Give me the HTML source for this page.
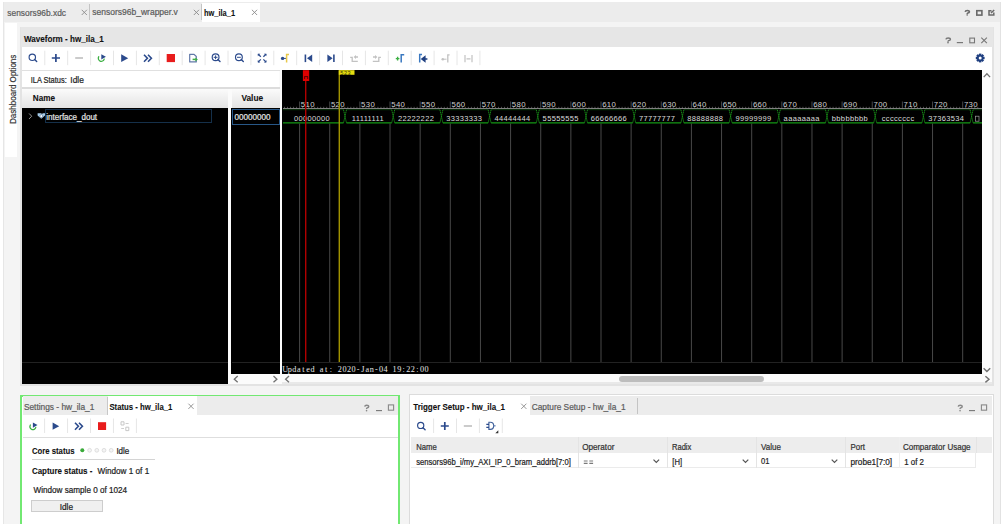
<!DOCTYPE html>
<html><head><meta charset="utf-8">
<style>
*{margin:0;padding:0;box-sizing:border-box}
html,body{width:1006px;height:524px;overflow:hidden;background:#fff;font-family:"Liberation Sans",sans-serif;font-size:8.1px;color:#1e1e1e}
.a{position:absolute}
.t{position:absolute;white-space:pre;line-height:1}
.b{font-weight:bold;font-size:7.9px;color:#111}
.g{color:#6e6e6e}
svg{position:absolute;left:0;top:0}
</style></head><body>

<!-- outer frame -->
<div class="a" style="left:3px;top:2px;width:998px;height:522px;background:#f4f4f4;border-left:1px solid #e6e6e6;border-right:1px solid #e2e2e2"></div>
<!-- top tab bar -->
<div class="a" style="left:4px;top:2px;width:996px;height:19.5px;background:#ececec"></div>
<div class="a" style="left:89px;top:4px;width:1px;height:16px;background:#c4c4c4"></div>
<div class="a" style="left:201px;top:4px;width:1px;height:16px;background:#c4c4c4"></div>
<div class="a" style="left:202px;top:3px;width:58px;height:18.5px;background:#fff"></div>

<!-- sidebar -->
<div class="a" style="left:4.5px;top:22.5px;width:12px;height:134.7px;background:#fff"></div>

<!-- waveform panel -->
<div class="a" style="left:20.2px;top:26.5px;width:973.6px;height:359px;background:#e3e3e3"></div>
<div class="a" style="left:21px;top:27.2px;width:972px;height:19.8px;background:#e6e6e6"></div>
<div class="a" style="left:22.4px;top:47px;width:969.3px;height:336.6px;background:#fbfbfb"></div>
<div class="a" style="left:22.4px;top:47px;width:969.3px;height:23px;background:#fff"></div>
<div class="a" style="left:22.4px;top:69.9px;width:257.6px;height:1px;background:#e0e0e0"></div>
<div class="a" style="left:22.4px;top:70.9px;width:256.8px;height:16.3px;background:#fff"></div>
<div class="a" style="left:22.4px;top:87.2px;width:257.6px;height:1.5px;background:#dcdcdc"></div>
<!-- name header -->
<div class="a" style="left:22.4px;top:88.7px;width:205.6px;height:19.6px;background:linear-gradient(#fbfbfb,#e3e3e3)"></div>
<div class="a" style="left:231.5px;top:88.7px;width:48px;height:19.6px;background:linear-gradient(#fbfbfb,#e3e3e3)"></div>
<!-- black panes -->
<div class="a" style="left:22.3px;top:108.3px;width:205.7px;height:275.3px;background:#000"></div>
<div class="a" style="left:231.3px;top:108.3px;width:48.6px;height:265.3px;background:#000"></div>
<div class="a" style="left:282.2px;top:70.2px;width:699.7px;height:303.4px;background:#000"></div>
<div class="a" style="left:22.3px;top:361.6px;width:205.7px;height:1px;background:#222"></div>
<div class="a" style="left:231.5px;top:361.6px;width:48.4px;height:1px;background:#222"></div>
<div class="a" style="left:282.2px;top:361.6px;width:699.7px;height:1px;background:#222"></div>
<!-- rows -->
<div class="a" style="left:45.4px;top:108.6px;width:167px;height:14.5px;border:1px solid #15304a"></div>
<div class="a" style="left:231.8px;top:108.5px;width:47.8px;height:16px;border:1.5px solid #285888"></div>
<!-- scrollbars -->
<div class="a" style="left:282.2px;top:382.3px;width:709.5px;height:1.3px;background:#e9e9e9"></div>
<div class="a" style="left:619px;top:375.8px;width:145px;height:6.1px;background:#bdbdbd;border-radius:3px"></div>

<!-- bottom left panel -->
<div class="a" style="left:20.4px;top:394.6px;width:379.4px;height:140px;border:2.1px solid #72e872;background:#fff"></div>
<div class="a" style="left:22.9px;top:396.3px;width:375.2px;height:18.3px;background:#ececec"></div>
<div class="a" style="left:106.5px;top:397px;width:1px;height:17.5px;background:#c8c8c8"></div>
<div class="a" style="left:107.5px;top:396.3px;width:89.5px;height:18.3px;background:#fff"></div>
<div class="a" style="left:23px;top:436.5px;width:375px;height:1px;background:#dedede"></div>
<div class="a" style="left:32px;top:459px;width:123px;height:1px;background:#d4d4d4"></div>
<div class="a" style="left:31px;top:499.6px;width:72px;height:12px;background:#f0f0f0;border:1px solid #cdcdcd"></div>

<!-- bottom right panel -->
<div class="a" style="left:409.4px;top:394.4px;width:584.6px;height:140px;border:1.8px solid #dcdcdc;background:#fff"></div>
<div class="a" style="left:411.2px;top:396.2px;width:580.8px;height:18.5px;background:#ececec"></div>
<div class="a" style="left:411.2px;top:396.2px;width:119px;height:18.5px;background:#fff"></div>
<div class="a" style="left:637px;top:397.5px;width:1px;height:16px;background:#c4c4c4"></div>
<div class="a" style="left:411.2px;top:437.3px;width:580.8px;height:15.5px;background:#ededed"></div>
<div class="a" style="left:411.2px;top:452.8px;width:565px;height:15.2px;background:#fff;border-bottom:1px solid #ebebeb;border-right:1px solid #ebebeb"></div>
<div class="a" style="left:577.9px;top:437.3px;width:1px;height:30.7px;background:#e4e4e4"></div>
<div class="a" style="left:666.5px;top:437.3px;width:1px;height:30.7px;background:#e4e4e4"></div>
<div class="a" style="left:755.9px;top:437.3px;width:1px;height:30.7px;background:#e4e4e4"></div>
<div class="a" style="left:845.4px;top:437.3px;width:1px;height:30.7px;background:#e4e4e4"></div>
<div class="a" style="left:898.5px;top:437.3px;width:1px;height:30.7px;background:#efefef"></div>
<div class="a" style="left:976.2px;top:437.3px;width:1px;height:15.5px;background:#e4e4e4"></div>

<svg width="1006" height="524" viewBox="0 0 1006 524">
<path d="M299.60 123.5V362M329.74 123.5V362M359.88 123.5V362M390.02 123.5V362M420.16 123.5V362M450.30 123.5V362M480.44 123.5V362M510.58 123.5V362M540.72 123.5V362M570.86 123.5V362M601.00 123.5V362M631.14 123.5V362M661.28 123.5V362M691.42 123.5V362M721.56 123.5V362M751.70 123.5V362M781.84 123.5V362M811.98 123.5V362M842.12 123.5V362M872.26 123.5V362M902.40 123.5V362M932.54 123.5V362M962.68 123.5V362" stroke="#484848" stroke-width="1" fill="none"/>
<path d="M283 108.5H982" stroke="#808080" stroke-width="1"/>
<path d="M299.60 101.5V108M329.74 101.5V108M359.88 101.5V108M390.02 101.5V108M420.16 101.5V108M450.30 101.5V108M480.44 101.5V108M510.58 101.5V108M540.72 101.5V108M570.86 101.5V108M601.00 101.5V108M631.14 101.5V108M661.28 101.5V108M691.42 101.5V108M721.56 101.5V108M751.70 101.5V108M781.84 101.5V108M811.98 101.5V108M842.12 101.5V108M872.26 101.5V108M902.40 101.5V108M932.54 101.5V108M962.68 101.5V108" stroke="#464646" stroke-width="1" fill="none"/>
<path d="M284.53 106.8V108M287.54 106.8V108M290.56 106.8V108M293.57 106.8V108M296.59 106.8V108M302.61 106.8V108M305.63 106.8V108M308.64 106.8V108M311.66 106.8V108M314.67 106.8V108M317.68 106.8V108M320.70 106.8V108M323.71 106.8V108M326.73 106.8V108M332.75 106.8V108M335.77 106.8V108M338.78 106.8V108M341.80 106.8V108M344.81 106.8V108M347.82 106.8V108M350.84 106.8V108M353.85 106.8V108M356.87 106.8V108M362.89 106.8V108M365.91 106.8V108M368.92 106.8V108M371.94 106.8V108M374.95 106.8V108M377.96 106.8V108M380.98 106.8V108M383.99 106.8V108M387.01 106.8V108M393.03 106.8V108M396.05 106.8V108M399.06 106.8V108M402.08 106.8V108M405.09 106.8V108M408.10 106.8V108M411.12 106.8V108M414.13 106.8V108M417.15 106.8V108M423.17 106.8V108M426.19 106.8V108M429.20 106.8V108M432.22 106.8V108M435.23 106.8V108M438.24 106.8V108M441.26 106.8V108M444.27 106.8V108M447.29 106.8V108M453.31 106.8V108M456.33 106.8V108M459.34 106.8V108M462.36 106.8V108M465.37 106.8V108M468.38 106.8V108M471.40 106.8V108M474.41 106.8V108M477.43 106.8V108M483.45 106.8V108M486.47 106.8V108M489.48 106.8V108M492.50 106.8V108M495.51 106.8V108M498.52 106.8V108M501.54 106.8V108M504.55 106.8V108M507.57 106.8V108M513.59 106.8V108M516.61 106.8V108M519.62 106.8V108M522.64 106.8V108M525.65 106.8V108M528.66 106.8V108M531.68 106.8V108M534.69 106.8V108M537.71 106.8V108M543.73 106.8V108M546.75 106.8V108M549.76 106.8V108M552.78 106.8V108M555.79 106.8V108M558.80 106.8V108M561.82 106.8V108M564.83 106.8V108M567.85 106.8V108M573.87 106.8V108M576.89 106.8V108M579.90 106.8V108M582.92 106.8V108M585.93 106.8V108M588.94 106.8V108M591.96 106.8V108M594.97 106.8V108M597.99 106.8V108M604.01 106.8V108M607.03 106.8V108M610.04 106.8V108M613.06 106.8V108M616.07 106.8V108M619.08 106.8V108M622.10 106.8V108M625.11 106.8V108M628.13 106.8V108M634.15 106.8V108M637.17 106.8V108M640.18 106.8V108M643.20 106.8V108M646.21 106.8V108M649.22 106.8V108M652.24 106.8V108M655.25 106.8V108M658.27 106.8V108M664.29 106.8V108M667.31 106.8V108M670.32 106.8V108M673.34 106.8V108M676.35 106.8V108M679.36 106.8V108M682.38 106.8V108M685.39 106.8V108M688.41 106.8V108M694.43 106.8V108M697.45 106.8V108M700.46 106.8V108M703.48 106.8V108M706.49 106.8V108M709.50 106.8V108M712.52 106.8V108M715.53 106.8V108M718.55 106.8V108M724.57 106.8V108M727.59 106.8V108M730.60 106.8V108M733.62 106.8V108M736.63 106.8V108M739.64 106.8V108M742.66 106.8V108M745.67 106.8V108M748.69 106.8V108M754.71 106.8V108M757.73 106.8V108M760.74 106.8V108M763.76 106.8V108M766.77 106.8V108M769.78 106.8V108M772.80 106.8V108M775.81 106.8V108M778.83 106.8V108M784.85 106.8V108M787.87 106.8V108M790.88 106.8V108M793.90 106.8V108M796.91 106.8V108M799.92 106.8V108M802.94 106.8V108M805.95 106.8V108M808.97 106.8V108M814.99 106.8V108M818.01 106.8V108M821.02 106.8V108M824.04 106.8V108M827.05 106.8V108M830.06 106.8V108M833.08 106.8V108M836.09 106.8V108M839.11 106.8V108M845.13 106.8V108M848.15 106.8V108M851.16 106.8V108M854.18 106.8V108M857.19 106.8V108M860.20 106.8V108M863.22 106.8V108M866.23 106.8V108M869.25 106.8V108M875.27 106.8V108M878.29 106.8V108M881.30 106.8V108M884.32 106.8V108M887.33 106.8V108M890.34 106.8V108M893.36 106.8V108M896.37 106.8V108M899.39 106.8V108M905.41 106.8V108M908.43 106.8V108M911.44 106.8V108M914.46 106.8V108M917.47 106.8V108M920.48 106.8V108M923.50 106.8V108M926.51 106.8V108M929.53 106.8V108M935.55 106.8V108M938.57 106.8V108M941.58 106.8V108M944.60 106.8V108M947.61 106.8V108M950.62 106.8V108M953.64 106.8V108M956.65 106.8V108M959.67 106.8V108M965.69 106.8V108M968.71 106.8V108M971.72 106.8V108M974.74 106.8V108M977.75 106.8V108" stroke="#5a5a5a" stroke-width="0.9" fill="none"/>
<g font-family="Liberation Sans" font-size="7.8" letter-spacing="0.35" fill="#d0d0d0"><text x="300.80" y="106.6">510</text><text x="330.94" y="106.6">520</text><text x="361.08" y="106.6">530</text><text x="391.22" y="106.6">540</text><text x="421.36" y="106.6">550</text><text x="451.50" y="106.6">560</text><text x="481.64" y="106.6">570</text><text x="511.78" y="106.6">580</text><text x="541.92" y="106.6">590</text><text x="572.06" y="106.6">600</text><text x="602.20" y="106.6">610</text><text x="632.34" y="106.6">620</text><text x="662.48" y="106.6">630</text><text x="692.62" y="106.6">640</text><text x="722.76" y="106.6">650</text><text x="752.90" y="106.6">660</text><text x="783.04" y="106.6">670</text><text x="813.18" y="106.6">680</text><text x="843.32" y="106.6">690</text><text x="873.46" y="106.6">700</text><text x="903.60" y="106.6">710</text><text x="933.74" y="106.6">720</text><text x="963.88" y="106.6">730</text></g>
<path d="M283.00 109.7H343.50M346.50 109.7H391.70M394.70 109.7H439.90M442.90 109.7H488.10M491.10 109.7H536.30M539.30 109.7H584.50M587.50 109.7H632.70M635.70 109.7H680.90M683.90 109.7H729.10M732.10 109.7H777.30M780.30 109.7H825.50M828.50 109.7H873.70M876.70 109.7H921.90M924.90 109.7H970.10M973.10 109.7H982.00" stroke="#0a360a" stroke-width="1" fill="none"/>
<path d="M283.00 122.9H343.50M346.50 122.9H391.70M394.70 122.9H439.90M442.90 122.9H488.10M491.10 122.9H536.30M539.30 122.9H584.50M587.50 122.9H632.70M635.70 122.9H680.90M683.90 122.9H729.10M732.10 122.9H777.30M780.30 122.9H825.50M828.50 122.9H873.70M876.70 122.9H921.90M924.90 122.9H970.10M973.10 122.9H982.00" stroke="#149614" stroke-width="1.3" fill="none"/>
<path d="M343.50 109.7L346.50 122.9M346.50 109.7L343.50 122.9M391.70 109.7L394.70 122.9M394.70 109.7L391.70 122.9M439.90 109.7L442.90 122.9M442.90 109.7L439.90 122.9M488.10 109.7L491.10 122.9M491.10 109.7L488.10 122.9M536.30 109.7L539.30 122.9M539.30 109.7L536.30 122.9M584.50 109.7L587.50 122.9M587.50 109.7L584.50 122.9M632.70 109.7L635.70 122.9M635.70 109.7L632.70 122.9M680.90 109.7L683.90 122.9M683.90 109.7L680.90 122.9M729.10 109.7L732.10 122.9M732.10 109.7L729.10 122.9M777.30 109.7L780.30 122.9M780.30 109.7L777.30 122.9M825.50 109.7L828.50 122.9M828.50 109.7L825.50 122.9M873.70 109.7L876.70 122.9M876.70 109.7L873.70 122.9M921.90 109.7L924.90 122.9M924.90 109.7L921.90 122.9M970.10 109.7L973.10 122.9M973.10 109.7L970.10 122.9" stroke="#1aa01a" stroke-width="1" fill="none" stroke-dasharray="1.2 0.8"/>
<g font-family="Liberation Sans" font-size="7.5" letter-spacing="0.35" fill="#dcdcdc"><text x="312.00" y="121.2" text-anchor="middle">00000000</text><text x="367.90" y="121.2" text-anchor="middle">11111111</text><text x="416.10" y="121.2" text-anchor="middle">22222222</text><text x="464.30" y="121.2" text-anchor="middle">33333333</text><text x="512.50" y="121.2" text-anchor="middle">44444444</text><text x="560.70" y="121.2" text-anchor="middle">55555555</text><text x="608.90" y="121.2" text-anchor="middle">66666666</text><text x="657.10" y="121.2" text-anchor="middle">77777777</text><text x="705.30" y="121.2" text-anchor="middle">88888888</text><text x="753.50" y="121.2" text-anchor="middle">99999999</text><text x="801.70" y="121.2" text-anchor="middle">aaaaaaaa</text><text x="849.90" y="121.2" text-anchor="middle">bbbbbbbb</text><text x="898.10" y="121.2" text-anchor="middle">cccccccc</text><text x="946.30" y="121.2" text-anchor="middle">37363534</text></g>
<rect x="975.6" y="116.2" width="3.4" height="5" fill="none" stroke="#a0a0a0" stroke-width="0.7"/>
<text x="285.20 289.76 294.32 298.88 303.44 308.00 312.56 317.12 321.68 326.24 330.80 335.36 339.92 344.48 349.04 353.60 358.16 362.72 367.28 371.84 376.40 380.96 385.52 390.08 394.64 399.20 403.76 408.32 412.88 417.44 422.00 426.56" y="372" text-anchor="middle" font-family="Liberation Serif" font-size="8.2" fill="#e6e6e6">Updated&#160;at:&#160;2020-Jan-04&#160;19:22:00</text>
<path d="M44.80 50.7V65.2M67.70 50.7V65.2M90.60 50.7V65.2M113.50 50.7V65.2M136.40 50.7V65.2M159.30 50.7V65.2M182.20 50.7V65.2M205.10 50.7V65.2M228.00 50.7V65.2M250.90 50.7V65.2M273.80 50.7V65.2M296.70 50.7V65.2M319.60 50.7V65.2M342.50 50.7V65.2M365.40 50.7V65.2M388.30 50.7V65.2M411.20 50.7V65.2M434.10 50.7V65.2M457.00 50.7V65.2M479.90 50.7V65.2" stroke="#e6e6e6" stroke-width="1" fill="none"/>
<circle cx="32.3" cy="57.3" r="3.2" stroke="#2b4a8c" stroke-width="1.15" fill="none"/><path d="M34.60 59.60L36.70 61.60" stroke="#2b4a8c" stroke-width="1.4" stroke-linecap="round"/>
<path d="M51.80 58H60.00M55.9 53.90V62.10" stroke="#2b4a8c" stroke-width="1.7"/>
<path d="M75.20 58H83.00" stroke="#c2c2c2" stroke-width="1.7"/>
<path d="M98.76 56.71A3.0 3.0 0 1 0 104.18 59.13" stroke="#3cb043" stroke-width="1.3" fill="none" stroke-linecap="round"/><path d="M101.30 54.30L105.90 56.80L101.30 59.50Z" fill="#2b4a8c"/>
<path d="M121.2 54.2L128.2 58.15L121.2 62.1Z" fill="#2b4a8c"/>
<path d="M144 54.7L147.4 58.2L144 61.7M148 54.7L151.4 58.2L148 61.7" stroke="#2b4a8c" stroke-width="1.6" fill="none"/>
<rect x="166.7" y="54" width="8.30" height="8.10" fill="#e81c1c"/>
<path d="M189.7 54.3H194.1L196.3 56.5V61.9H189.7Z" stroke="#6178a8" stroke-width="1.2" fill="#fff" stroke-linejoin="round"/>
<path d="M192.6 59.4H195.8" stroke="#3cb043" stroke-width="1.5"/><path d="M195.3 57.4L197.9 59.4L195.3 61.4Z" fill="#3cb043"/>
<circle cx="215.6" cy="57.3" r="3.4" stroke="#2b4a8c" stroke-width="1.15" fill="none"/><path d="M217.90 59.60L220.00 61.60" stroke="#2b4a8c" stroke-width="1.4" stroke-linecap="round"/>
<path d="M213.7 57.3H217.5M215.6 55.4V59.2" stroke="#2b4a8c" stroke-width="1"/>
<circle cx="238.9" cy="57.3" r="3.4" stroke="#2b4a8c" stroke-width="1.15" fill="none"/><path d="M241.20 59.60L243.30 61.60" stroke="#2b4a8c" stroke-width="1.4" stroke-linecap="round"/>
<path d="M237 57.3H240.8" stroke="#2b4a8c" stroke-width="1"/>
<path d="M258.10 54.10L260.80 56.80" stroke="#2b4a8c" stroke-width="1.3"/><path d="M257.80 53.80L257.80 56.30L260.30 53.80Z" fill="#2b4a8c"/><path d="M258.10 62.10L260.80 59.40" stroke="#2b4a8c" stroke-width="1.3"/><path d="M257.80 62.40L257.80 59.90L260.30 62.40Z" fill="#2b4a8c"/><path d="M266.10 54.10L263.40 56.80" stroke="#2b4a8c" stroke-width="1.3"/><path d="M266.40 53.80L266.40 56.30L263.90 53.80Z" fill="#2b4a8c"/><path d="M266.10 62.10L263.40 59.40" stroke="#2b4a8c" stroke-width="1.3"/><path d="M266.40 62.40L266.40 59.90L263.90 62.40Z" fill="#2b4a8c"/>
<circle cx="282.6" cy="58.4" r="1.7" fill="#2b4a8c"/><path d="M283.5 58.4H286" stroke="#2b4a8c" stroke-width="1"/><path d="M289 54.6H286.6V62.6" stroke="#e8c84a" stroke-width="1.5" fill="none"/>
<path d="M305.4 54.5V62.1" stroke="#2b4a8c" stroke-width="1.6"/><path d="M312.2 54.5L307 58.30L312.2 62.1Z" fill="#2b4a8c"/>
<path d="M333.9 54.5V62.1" stroke="#2b4a8c" stroke-width="1.6"/><path d="M327.4 54.5L332.6 58.30L327.4 62.1Z" fill="#2b4a8c"/>
<path d="M350.2 57.3H352.2V61.4H357.8" stroke="#c2c2c2" stroke-width="1.3" fill="none"/><path d="M355.2 57H358" stroke="#c2c2c2" stroke-width="1.5"/><path d="M356 55.1L353.6 57L356 58.9Z" fill="#c2c2c2"/>
<path d="M372.8 61.4H378.8V57.3H380.9" stroke="#c2c2c2" stroke-width="1.3" fill="none"/><path d="M373 57H375.8" stroke="#c2c2c2" stroke-width="1.5"/><path d="M375 55.1L377.4 57L375 58.9Z" fill="#c2c2c2"/>
<path d="M395.8 58.6H399.4M397.6 56.8V60.4" stroke="#3cb043" stroke-width="1.4"/><path d="M404.2 54.7H401.2V62.4" stroke="#3a78c0" stroke-width="1.5" fill="none"/>
<path d="M422 54.6H419.7V62.4" stroke="#3a78c0" stroke-width="1.5" fill="none"/><path d="M427.4 59H424M424.8 56.8L422 59L424.8 61.2Z" stroke="#1f3f80" stroke-width="1.6" fill="#1f3f80"/>
<circle cx="442.8" cy="59.2" r="1.3" fill="#c2c2c2"/><path d="M444 59.2H446.5" stroke="#c2c2c2" stroke-width="1"/><path d="M449.6 54.8H447.8V62.4" stroke="#c2c2c2" stroke-width="1.3" fill="none"/>
<path d="M465 55V62.3M472 55V62.3M466.5 58.8H470.5" stroke="#c2c2c2" stroke-width="1.2" fill="none"/>
<rect x="979.00" y="53.60" width="2.4" height="2.2" fill="#1f3f80" transform="rotate(0 980.2 58)"/><rect x="979.00" y="53.60" width="2.4" height="2.2" fill="#1f3f80" transform="rotate(45 980.2 58)"/><rect x="979.00" y="53.60" width="2.4" height="2.2" fill="#1f3f80" transform="rotate(90 980.2 58)"/><rect x="979.00" y="53.60" width="2.4" height="2.2" fill="#1f3f80" transform="rotate(135 980.2 58)"/><rect x="979.00" y="53.60" width="2.4" height="2.2" fill="#1f3f80" transform="rotate(180 980.2 58)"/><rect x="979.00" y="53.60" width="2.4" height="2.2" fill="#1f3f80" transform="rotate(225 980.2 58)"/><rect x="979.00" y="53.60" width="2.4" height="2.2" fill="#1f3f80" transform="rotate(270 980.2 58)"/><rect x="979.00" y="53.60" width="2.4" height="2.2" fill="#1f3f80" transform="rotate(315 980.2 58)"/><circle cx="980.2" cy="58" r="3.1" fill="#1f3f80"/><circle cx="980.2" cy="58" r="1.5" fill="#fff"/>
<path d="M965.20 11.80Q965.40 10.50 967.25 10.50Q969.40 10.50 969.40 11.80Q969.30 12.70 967.75 13.10Q967.15 13.40 967.15 14.20" stroke="#6a6a6a" stroke-width="1.6" fill="none"/><circle cx="967.15" cy="15.05" r="0.8" fill="#6a6a6a"/>
<rect x="976.8" y="10.7" width="5.10" height="4.40" stroke="#6a6a6a" stroke-width="1.6" fill="none"/>
<path d="M991.5 10.7H989V15.1H993.8V12.6M991 13L994.2 10" stroke="#6a6a6a" stroke-width="1.5" fill="none"/>
<path d="M81.70 9.80L86.90 15.00M86.90 9.80L81.70 15.00" stroke="#8a8a8a" stroke-width="0.9"/>
<path d="M193.80 9.80L199.00 15.00M199.00 9.80L193.80 15.00" stroke="#8a8a8a" stroke-width="0.9"/>
<path d="M251.90 9.80L257.10 15.00M257.10 9.80L251.90 15.00" stroke="#8a8a8a" stroke-width="0.9"/>
<path d="M945.90 39.30Q946.10 38.00 948.10 38.00Q950.40 38.00 950.40 39.30Q950.30 40.20 948.60 40.60Q948.00 40.90 948.00 41.70" stroke="#777" stroke-width="1.4" fill="none"/><circle cx="948.00" cy="42.65" r="0.8" fill="#777"/>
<path d="M956.8 42.6H963" stroke="#777" stroke-width="1.2"/>
<rect x="969.8" y="38.1" width="4.70" height="4.70" stroke="#777" stroke-width="1.1" fill="none"/>
<path d="M981.30 37.60L986.90 43.20M986.90 37.60L981.30 43.20" stroke="#777" stroke-width="1.1"/>
<path d="M237.70 376.10L234.30 379.20L237.70 382.30" stroke="#707070" stroke-width="1.3" fill="none"/>
<path d="M273.50 376.10L276.90 379.20L273.50 382.30" stroke="#707070" stroke-width="1.3" fill="none"/>
<path d="M289.00 376.10L285.60 379.20L289.00 382.30" stroke="#707070" stroke-width="1.3" fill="none"/>
<path d="M985.40 376.20L989.00 379.30L985.40 382.40" stroke="#707070" stroke-width="1.4" fill="none"/>
<path d="M983.70 77.10L986.90 73.70L990.10 77.10" stroke="#707070" stroke-width="1.3" fill="none"/>
<path d="M983.60 368.20L986.90 371.60L990.20 368.20" stroke="#707070" stroke-width="1.4" fill="none"/>
<path d="M29.10 113.50L31.70 116.20L29.10 118.90" stroke="#9a9a9a" stroke-width="1" fill="none"/>
<path d="M37.6 113.2H41.3L42 114.2L42.7 113.2H45V115.5L41.3 118.8L37.6 115.5Z" fill="#a8cdea"/><circle cx="41.3" cy="116.1" r="1.5" fill="#fff" stroke="#4a6a8a" stroke-width="0.6"/>
<path d="M305.7 81V362" stroke="#b00000" stroke-width="1.4"/>
<rect x="302.9" y="70.2" width="6.3" height="10.8" fill="#e00000"/>
<path d="M304.3 76.6H308M304.6 76.6V79M307.7 76.6V79" stroke="#500000" stroke-width="0.9" fill="none"/>
<path d="M339.3 70.2V362" stroke="#a09200" stroke-width="1.4"/>
<rect x="338.8" y="70.2" width="15.7" height="4.6" fill="#e4dc10"/>
<text x="340.2" y="74.6" font-family="Liberation Sans" font-size="5.6" letter-spacing="0.6" fill="#3a3400">523</text>
<path d="M44.60 418.5V433M67.55 418.5V433M90.50 418.5V433M113.45 418.5V433M136.40 418.5V433" stroke="#e6e6e6" stroke-width="1" fill="none"/>
<path d="M30.36 425.01A3.0 3.0 0 1 0 35.78 427.43" stroke="#3cb043" stroke-width="1.3" fill="none" stroke-linecap="round"/><path d="M32.90 422.60L37.50 425.10L32.90 427.80Z" fill="#2b4a8c"/>
<path d="M52.6 422.6L59.2 426.15L52.6 429.7Z" fill="#2b4a8c"/>
<path d="M75 422.7L78.4 426.2L75 429.7M79 422.7L82.4 426.2L79 429.7" stroke="#2b4a8c" stroke-width="1.6" fill="none"/>
<rect x="98" y="422.2" width="8.10" height="7.80" fill="#e81c1c"/>
<path d="M121 421.8H124V425H121ZM125.8 427.2H128.8V430.6H125.8Z" stroke="#c2c2c2" stroke-width="0.9" fill="none"/><path d="M125.6 423.5H128.6M121.2 428.5H124" stroke="#c2c2c2" stroke-width="0.8"/>
<path d="M188.40 403.70L193.60 408.90M193.60 403.70L188.40 408.90" stroke="#8a8a8a" stroke-width="0.9"/>
<path d="M364.70 406.60Q364.90 405.30 366.65 405.30Q368.70 405.30 368.70 406.60Q368.60 407.50 367.15 407.90Q366.55 408.20 366.55 409.00" stroke="#888" stroke-width="1.4" fill="none"/><circle cx="366.55" cy="410.65" r="0.8" fill="#888"/>
<path d="M376 410.6H382" stroke="#777" stroke-width="1.1"/>
<rect x="388.4" y="404.9" width="5.20" height="5.30" stroke="#888" stroke-width="1.1" fill="none"/>
<circle cx="82.3" cy="450.2" r="2" fill="#3aaa3a"/>
<circle cx="89.6" cy="450.3" r="1.9" fill="#f4f4f4" stroke="#d4d4d4" stroke-width="0.7"/>
<circle cx="96.8" cy="450.3" r="1.9" fill="#f4f4f4" stroke="#d4d4d4" stroke-width="0.7"/>
<circle cx="104" cy="450.3" r="1.9" fill="#f4f4f4" stroke="#d4d4d4" stroke-width="0.7"/>
<circle cx="111.2" cy="450.3" r="1.9" fill="#f4f4f4" stroke="#d4d4d4" stroke-width="0.7"/>
<path d="M433.60 418.5V433M456.50 418.5V433M479.40 418.5V433M502.30 418.5V433" stroke="#e6e6e6" stroke-width="1" fill="none"/>
<circle cx="420.7" cy="425.4" r="3.1" stroke="#2b4a8c" stroke-width="1.15" fill="none"/><path d="M423.00 427.70L425.10 429.70" stroke="#2b4a8c" stroke-width="1.4" stroke-linecap="round"/>
<path d="M440.80 426H448.80M444.8 422.00V430.00" stroke="#2b4a8c" stroke-width="1.7"/>
<path d="M463.80 426H472.00" stroke="#c2c2c2" stroke-width="1.7"/>
<path d="M488.9 422.2H490.3A3.4 3.6 0 0 1 490.3 429.4H488.9Z" stroke="#40609a" stroke-width="1.15" fill="none"/><path d="M486.3 424.3H489M486.3 427.4H489" stroke="#2b4a8c" stroke-width="1.2"/><path d="M493.6 425.8H495.6" stroke="#6a88b8" stroke-width="1.3"/><path d="M498.3 430.2V433.2H495.3Z" fill="#333"/>
<path d="M521.20 403.70L526.40 408.90M526.40 403.70L521.20 408.90" stroke="#8a8a8a" stroke-width="0.9"/>
<path d="M958.20 406.60Q958.40 405.30 960.15 405.30Q962.20 405.30 962.20 406.60Q962.10 407.50 960.65 407.90Q960.05 408.20 960.05 409.00" stroke="#888" stroke-width="1.4" fill="none"/><circle cx="960.05" cy="410.65" r="0.8" fill="#888"/>
<path d="M969 410.6H975" stroke="#777" stroke-width="1.1"/>
<rect x="981.4" y="404.9" width="5.20" height="5.30" stroke="#888" stroke-width="1.1" fill="none"/>
<path d="M653.50 459.60L656.30 462.40L659.10 459.60" stroke="#555" stroke-width="1.2" fill="none"/>
<path d="M742.70 459.60L745.50 462.40L748.30 459.60" stroke="#555" stroke-width="1.2" fill="none"/>
<path d="M831.70 459.60L834.50 462.40L837.30 459.60" stroke="#555" stroke-width="1.2" fill="none"/>
<g font-family="Liberation Sans" font-size="8.5" style="white-space:pre"><text transform="translate(7.30 15.6) scale(0.986 1)" fill="#5c5c5c" stroke="#5c5c5c" stroke-width="0.22">sensors96b.xdc</text>
<text transform="translate(92.20 15.4) scale(1.002 1)" fill="#5c5c5c" stroke="#5c5c5c" stroke-width="0.22">sensors96b_wrapper.v</text>
<text transform="translate(204.00 15.8) scale(0.877 1)" fill="#111" stroke="#111" stroke-width="0.1" font-weight="bold">hw_ila_1</text>
<text transform="translate(23.90 41.8) scale(0.954 1)" fill="#111" stroke="#111" stroke-width="0.1" font-weight="bold">Waveform - hw_ila_1</text>
<text transform="translate(30.70 82.8) scale(0.878 1)" fill="#1e1e1e" stroke="#1e1e1e" stroke-width="0.22">ILA Status:</text>
<text transform="translate(70.30 82.8) scale(0.986 1)" fill="#1e1e1e" stroke="#1e1e1e" stroke-width="0.22">Idle</text>
<text transform="translate(32.80 101.2) scale(0.963 1)" fill="#111" stroke="#111" stroke-width="0.1" font-weight="bold">Name</text>
<text transform="translate(241.40 101.2) scale(0.981 1)" fill="#111" stroke="#111" stroke-width="0.1" font-weight="bold">Value</text>
<text transform="translate(46.30 119.7) scale(0.945 1)" fill="#e4e4e4" stroke="#e4e4e4" stroke-width="0.22">interface_dout</text>
<text transform="translate(234.50 119.5) scale(0.954 1)" fill="#e4e4e4" stroke="#e4e4e4" stroke-width="0.22">00000000</text>
<text transform="translate(23.90 409.9) scale(0.983 1)" fill="#5c5c5c" stroke="#5c5c5c" stroke-width="0.22">Settings - hw_ila_1</text>
<text transform="translate(109.40 409.9) scale(0.915 1)" fill="#111" stroke="#111" stroke-width="0.1" font-weight="bold">Status - hw_ila_1</text>
<text transform="translate(31.90 453.9) scale(0.913 1)" fill="#111" stroke="#111" stroke-width="0.1" font-weight="bold">Core status</text>
<text transform="translate(116.40 453.9) scale(0.943 1)" fill="#1e1e1e" stroke="#1e1e1e" stroke-width="0.22">Idle</text>
<text transform="translate(31.90 473.7) scale(0.936 1)" fill="#111" stroke="#111" stroke-width="0.1" font-weight="bold">Capture status -</text>
<text transform="translate(97.50 473.7) scale(0.960 1)" fill="#1e1e1e" stroke="#1e1e1e" stroke-width="0.22">Window 1 of 1</text>
<text transform="translate(33.50 492.5) scale(0.959 1)" fill="#1e1e1e" stroke="#1e1e1e" stroke-width="0.22">Window sample 0 of 1024</text>
<text transform="translate(59.70 509.5) scale(0.972 1)" fill="#1e1e1e" stroke="#1e1e1e" stroke-width="0.22">Idle</text>
<text transform="translate(413.20 410.4) scale(0.940 1)" fill="#111" stroke="#111" stroke-width="0.1" font-weight="bold">Trigger Setup - hw_ila_1</text>
<text transform="translate(531.70 410.4) scale(0.980 1)" fill="#5c5c5c" stroke="#5c5c5c" stroke-width="0.22">Capture Setup - hw_ila_1</text>
<text transform="translate(416.20 449.5) scale(0.908 1)" fill="#333" stroke="#333" stroke-width="0.22">Name</text>
<text transform="translate(582.20 449.5) scale(0.960 1)" fill="#333" stroke="#333" stroke-width="0.22">Operator</text>
<text transform="translate(672.00 449.5) scale(0.889 1)" fill="#333" stroke="#333" stroke-width="0.22">Radix</text>
<text transform="translate(761.10 449.5) scale(0.942 1)" fill="#333" stroke="#333" stroke-width="0.22">Value</text>
<text transform="translate(850.50 449.5) scale(0.930 1)" fill="#333" stroke="#333" stroke-width="0.22">Port</text>
<text transform="translate(902.90 449.5) scale(0.944 1)" fill="#333" stroke="#333" stroke-width="0.22">Comparator Usage</text>
<text transform="translate(416.20 464.5) scale(0.900 1)" fill="#1e1e1e" stroke="#1e1e1e" stroke-width="0.22">sensors96b_i/my_AXI_IP_0_bram_addrb[7:0]</text>
<text transform="translate(672.30 464.5) scale(0.901 1)" fill="#1e1e1e" stroke="#1e1e1e" stroke-width="0.22">[H]</text>
<text transform="translate(761.00 464.4) scale(0.890 1)" fill="#1e1e1e" stroke="#1e1e1e" stroke-width="0.22">01</text>
<text transform="translate(850.50 464.5) scale(0.970 1)" fill="#1e1e1e" stroke="#1e1e1e" stroke-width="0.22">probe1[7:0]</text>
<text transform="translate(904.20 464.5) scale(0.927 1)" fill="#1e1e1e" stroke="#1e1e1e" stroke-width="0.22">1 of 2</text></g>
<path d="M583.8 461H587.6M583.8 463.4H587.6M589.3 461H593.1M589.3 463.4H593.1" stroke="#7a7a7a" stroke-width="1.1"/>
<text transform="translate(16.1 124.00) rotate(-90) scale(0.896 1)" font-family="Liberation Sans" font-size="9.0" fill="#333" stroke="#333" stroke-width="0.2">Dashboard Options</text>
</svg>
</body></html>
